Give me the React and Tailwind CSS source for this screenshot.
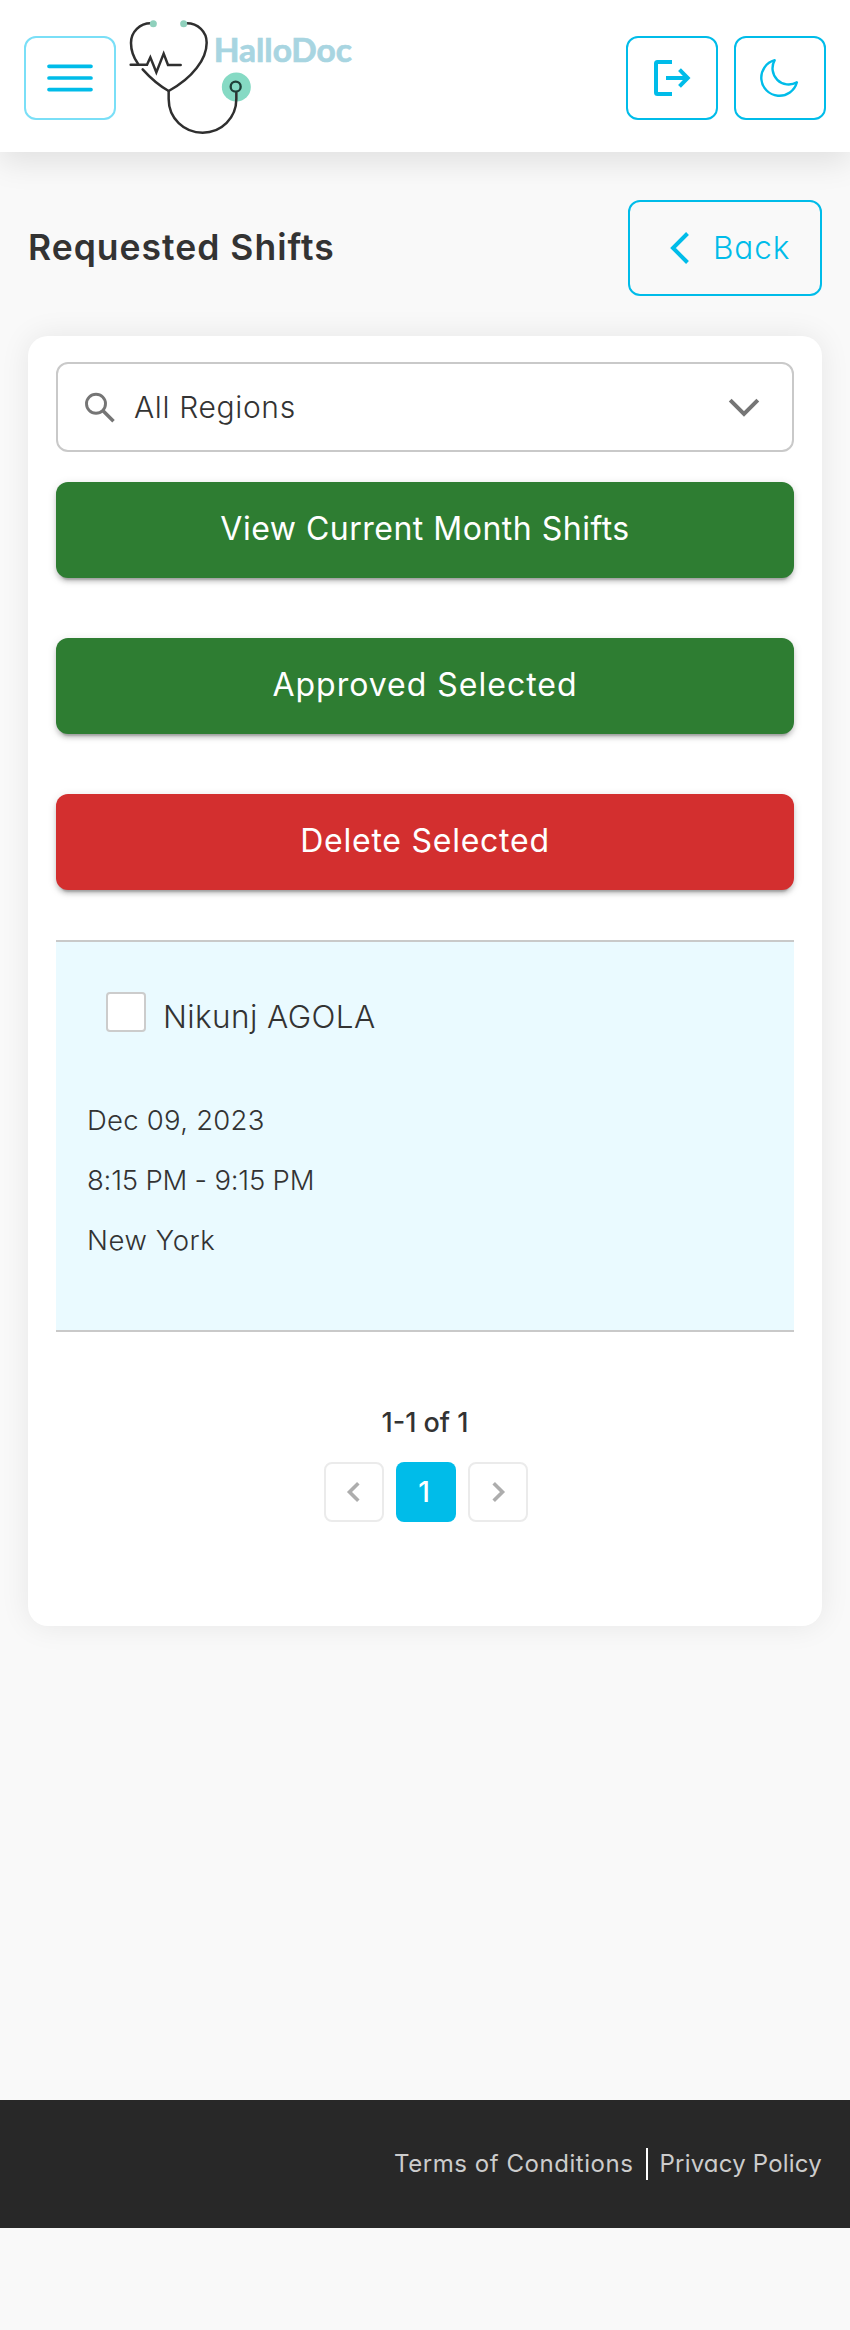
function Logo() {
  return (
    <svg className="-mt-1 ml-3 h-[152px] w-[226px]" viewBox="384 0 678 456" fill="none" role="img" aria-label="HalloDoc">
      <circle cx="709" cy="261" r="43.5" fill="#86dac4" />
      <g stroke="#2f2f2f" strokeWidth="7.5" strokeLinecap="round" strokeLinejoin="miter">
        <path d="M452 70C420 70 393 95 393 129C393 155 403 176 414 191" />
        <path d="M428 208C453 236 480 258 506 273" />
        <path d="M560 70C594 70 620 95 620 128C620 177 578 234 506 273V297C506 355 552 398 608 398C665 398 709 353 709 297V278" />
        <path d="M392 194H441L451 172L469 217L491 161L504 195H542" />
      </g>
      <circle cx="707" cy="260" r="15" stroke="#1f3f38" strokeWidth="7" />
      <circle cx="460" cy="71" r="10.5" fill="#8fd0bc" />
      <circle cx="551" cy="71" r="10.5" fill="#8fd0bc" />
      <text
        x="641"
        y="185"
        textLength="415"
        lengthAdjust="spacingAndGlyphs"
        fill="#a8d5e1"
        stroke="#a8d5e1"
        strokeWidth="2"
        className="font-['Lato',sans-serif] text-[95px] font-bold"
      >
        HalloDoc
      </text>
    </svg>
  );
}

function MenuIcon() {
  return (
    <svg className="h-12 w-12" viewBox="0 0 48 48" stroke="#00bce9" strokeWidth="3.7" strokeLinecap="round">
      <path d="M3 12.300H45M3 24H45M3 35.600H45" />
    </svg>
  );
}

function LogoutIcon() {
  return (
    <svg className="h-12 w-12" viewBox="0 0 48 48" fill="none" stroke="#00bce9" strokeWidth="4">
      <path d="M24 8H9.500Q8 8 8 9.500V38.500Q8 40 9.500 40H24" />
      <path d="M18 24H39" />
      <path d="M31.500 15.700L39.700 24L31.500 32.300" />
    </svg>
  );
}

function MoonIcon() {
  return (
    <svg className="h-12 w-12" viewBox="0 0 48 48" fill="none" stroke="#00bce9" strokeWidth="2.4" strokeLinejoin="round">
      <path d="M18.700 6.200A18.100 18.100 0 1 0 40.900 28.300A16.200 16.200 0 0 1 18.700 6.200Z" />
    </svg>
  );
}

function Chevron({ className, d, stroke, width = 4 }) {
  return (
    <svg className={className} viewBox="0 0 48 48" fill="none" stroke={stroke} strokeWidth={width}>
      <path d={d} />
    </svg>
  );
}

const actions = [
  { label: "View Current Month Shifts", style: "bg-[#2e7d32] tracking-[0.5px]" },
  { label: "Approved Selected", style: "bg-[#2e7d32] tracking-[1px]" },
  { label: "Delete Selected", style: "bg-[#d32f2f] tracking-[0.75px]" },
];

export default function App() {
  return (
    <div className="min-h-[2330px] bg-[#f9f9f9] font-['Inter','Open_Sans',sans-serif] text-[#333333] [font-feature-settings:'cv11']">
      <header className="flex h-[152px] items-center bg-white px-6 pt-1 shadow-[0_10px_30px_rgba(0,0,0,0.1)]">
        <button className="flex h-[84px] w-[92px] items-center justify-center rounded-xl border-2 border-[#7adff7]">
          <MenuIcon />
        </button>
        <Logo />
        <div className="ml-auto flex gap-4">
          <button className="flex h-[84px] w-[92px] items-center justify-center rounded-xl border-2 border-[#00bce9]">
            <LogoutIcon />
          </button>
          <button className="flex h-[84px] w-[92px] items-center justify-center rounded-xl border-2 border-[#00bce9]">
            <MoonIcon />
          </button>
        </div>
      </header>

      <main className="h-[1948px] px-7 pt-12">
        <div className="flex h-24 items-center justify-between">
          <h1 className="text-[35.5px] font-semibold tracking-[1px]">Requested Shifts</h1>
          <button className="flex h-24 w-[194px] items-center rounded-xl border-2 border-[#00bce9] pl-[26px] text-[#00bce9]">
            <Chevron className="h-12 w-12" stroke="#00bce9" d="M31.500 9.500L17 24L31.500 38.500" />
            <span className="-mt-px ml-[9px] text-[31.5px] font-light tracking-[0.9px]">Back</span>
          </button>
        </div>

        <section className="mt-10 h-[1290px] rounded-[20px] bg-white px-7 pt-[26px] shadow-[0_0_30px_rgba(0,0,0,0.08)]">
          <div className="flex h-[90px] items-center rounded-xl border-2 border-[#c9c9c9] px-6">
            <svg className="h-9 w-9" viewBox="0 0 36 36" fill="none" stroke="#757575" strokeWidth="2.9">
              <circle cx="14" cy="14.700" r="9.500" />
              <path d="M20.500 21.200L31.500 32.200" strokeWidth="3.600" />
            </svg>
            <span className="ml-4 text-[30px] font-light tracking-[0.65px]">All Regions</span>
            <Chevron className="ml-auto h-12 w-12" stroke="#757575" d="M10.200 17.200L24 31L37.800 17.200" />
          </div>

          <div className="mt-[30px] flex flex-col gap-[60px]">
            {actions.map(({ label, style }) => (
              <button
                key={label}
                className={`h-24 rounded-xl pb-0.5 text-[32px] text-white shadow-[0_6px_2px_-4px_rgba(0,0,0,0.2),0_4px_4px_0_rgba(0,0,0,0.14),0_2px_10px_0_rgba(0,0,0,0.12)] ${style}`}
              >
                {label}
              </button>
            ))}
          </div>

          <article className="mt-[50px] h-[392px] border-y-2 border-[#c9c9c9] bg-[#eafaff] px-8">
            <div className="flex pt-[50px] pl-[18px]">
              <span className="h-10 w-10 rounded border-2 border-[#cccccc] bg-white" />
              <span className="mt-[5px] ml-[17px] text-[31.5px] leading-10 font-light tracking-[0.4px]">Nikunj AGOLA</span>
            </div>
            <div className="mt-[53px] -ml-px text-[27.5px] leading-[60px] font-light">
              <p className="tracking-[0.25px]">Dec 09, 2023</p>
              <p className="tracking-[-0.2px]">8:15 PM - 9:15 PM</p>
              <p className="tracking-[0.6px]">New York</p>
            </div>
          </article>

          <nav className="mt-[70px] flex flex-col items-center">
            <p className="mt-px text-[27px] leading-10 font-medium">1-1 of 1</p>
            <div className="mt-[19px] flex gap-3 pl-0.5">
              <button className="flex h-[60px] w-[60px] items-center justify-center rounded-lg border-2 border-[#ebebeb]">
                <Chevron className="h-12 w-12" stroke="#adadad" width={3.6} d="M28.300 15.200L19.500 24L28.300 32.800" />
              </button>
              <button className="flex h-[60px] w-[60px] items-center justify-center rounded-lg bg-[#00bce9] pr-1 text-[28px] font-medium text-white">
                1
              </button>
              <button className="flex h-[60px] w-[60px] items-center justify-center rounded-lg border-2 border-[#ebebeb]">
                <Chevron className="h-12 w-12" stroke="#adadad" width={3.6} d="M19.700 15.200L28.500 24L19.700 32.800" />
              </button>
            </div>
          </nav>
        </section>
      </main>

      <footer className="flex h-32 items-center justify-end bg-[#282828] pr-7 text-[24px] text-[#cccccc]">
        <a className="tracking-[0.55px]">Terms of Conditions</a>
        <span className="mr-3 ml-3 h-8 w-0.5 bg-white" />
        <a className="tracking-[0.2px]">Privacy Policy</a>
      </footer>
    </div>
  );
}
